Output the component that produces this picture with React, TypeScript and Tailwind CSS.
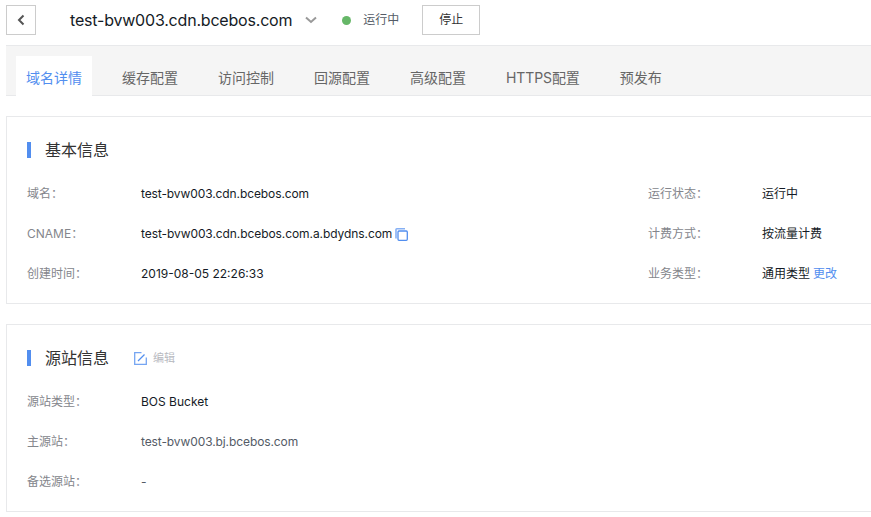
const FONT = "font-['Inter','Noto_Sans_CJK_SC',sans-serif]";

function Row({ label, children, valueClass = "text-[#151b26]" }: { label: string; children: React.ReactNode; valueClass?: string }) {
  return (
    <div className="flex h-10 items-center text-xs">
      <div className="w-[114px] shrink-0 text-[#84868c]">{label}</div>
      <div className={`flex items-center ${valueClass}`}>{children}</div>
    </div>
  );
}

function SectionTitle({ children }: { children: React.ReactNode }) {
  return (
    <div className="flex h-4 items-center">
      <span className="h-4 w-1 bg-[#528eef]" />
      <span className="ml-[14px] text-base leading-4 text-[#333]">{children}</span>
    </div>
  );
}

export default function App() {
  const tabs = ["缓存配置", "访问控制", "回源配置", "高级配置"];
  return (
    <div className={`${FONT} h-[517px] w-[871px] overflow-hidden bg-white pl-[6px]`}>
      <header className="flex h-[46px] items-start border-b border-[#e8e9eb] pt-[5px]">
        <button className="flex h-[30px] w-[30px] items-center justify-center border border-[#ccc] bg-white">
          <svg width="10" height="12" viewBox="0 0 10 12" fill="none" stroke="#555" strokeWidth="2">
            <path d="M7.5 1.500 3 6l4.500 4.500" />
          </svg>
        </button>
        <h1 className="ml-[34px] h-[30px] text-base leading-[30px] tracking-[-0.2px] text-[#151b26]">test-bvw003.cdn.bcebos.com</h1>
        <svg className="ml-[13px] mt-[11px]" width="12" height="8" viewBox="0 0 12 8" fill="none" stroke="#999" strokeWidth="2">
          <path d="M1 1.500 6 6l5-4.500" />
        </svg>
        <span className="ml-[25px] mt-[11px] h-[9px] w-[9px] rounded-full bg-[#66b768]" />
        <span className="ml-3 h-[30px] text-xs leading-[30px] text-[#545b66]">运行中</span>
        <button className="ml-[23px] h-[30px] w-[58px] border border-[#ccc] bg-white text-xs text-[#333]">停止</button>
      </header>

      <nav className="flex h-[50px] items-end border-b border-[#e8e9eb] bg-[#f5f5f5] pl-[10px] text-sm text-[#666]">
        <div className="-mb-px flex h-10 w-[76px] items-center justify-center bg-white pt-[3px] text-[#528eef]">域名详情</div>
        {tabs.map((t) => (
          <div key={t} className="flex h-10 items-center pl-[30px] pr-[10px] pt-[5px]">{t}</div>
        ))}
        <div className="flex h-10 items-center pl-[30px] pr-[10px] pt-[5px] tracking-[-0.1px]">HTTPS配置</div>
        <div className="flex h-10 items-center pl-[30px] pr-[10px] pt-[5px]">预发布</div>
      </nav>

      <section className="mt-5 h-[188px] border border-r-0 border-[#e8e9eb] pl-5 pt-[25px]">
        <SectionTitle>基本信息</SectionTitle>
        <div className="mt-4 flex">
          <div className="w-[621px]">
            <Row label="域名："><span className="tracking-[-0.1px]">test-bvw003.cdn.bcebos.com</span></Row>
            <Row label="CNAME：">
              <span className="tracking-[-0.08px]">test-bvw003.cdn.bcebos.com.a.bdydns.com</span>
              <svg className="ml-[3px]" width="13" height="13" viewBox="0 0 13 13" fill="none" stroke="#528eef">
                <path d="M1 10.500V1.500C1 1 1.300 .8 1.800 .8H10" strokeWidth="1.600" opacity="0.7" />
                <rect x="3" y="3" width="9.300" height="9.300" rx="1" strokeWidth="1.300" />
              </svg>
            </Row>
            <Row label="创建时间：">2019-08-05 22:26:33</Row>
          </div>
          <div>
            <Row label="运行状态：">运行中</Row>
            <Row label="计费方式：">按流量计费</Row>
            <Row label="业务类型：">
              通用类型<a className="ml-[3px] text-[#528eef]">更改</a>
            </Row>
          </div>
        </div>
      </section>

      <section className="mt-5 h-[188px] border border-r-0 border-[#e8e9eb] pl-5 pt-[25px]">
        <div className="flex h-4 items-center">
          <SectionTitle>源站信息</SectionTitle>
          <svg className="ml-[25px]" width="13" height="13" viewBox="0 0 13 13" fill="none" stroke="#528eef">
            <path d="M12.300 5.500v6.800H.7V.7H7.500" strokeWidth="1.300" opacity="0.8" />
            <path d="M4 9 10.500 2.500" strokeWidth="1.200" />
          </svg>
          <span className="ml-[6px] text-[11px] text-[#b8babf]">编辑</span>
        </div>
        <div className="mt-4">
          <Row label="源站类型：">BOS Bucket</Row>
          <Row label="主源站：" valueClass="text-[#545b66]"><span className="tracking-[-0.1px]">test-bvw003.bj.bcebos.com</span></Row>
          <Row label="备选源站：" valueClass="text-[#545b66]">-</Row>
        </div>
      </section>
    </div>
  );
}
